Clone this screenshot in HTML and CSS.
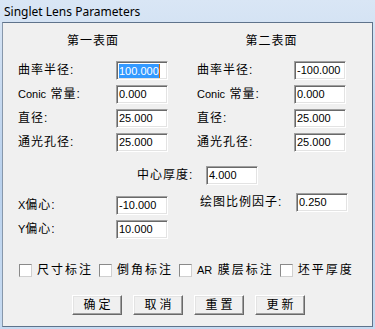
FILE: index.html
```html
<!DOCTYPE html>
<html lang="zh-CN">
  <head>
    <meta charset="UTF-8" />
    <title>Singlet Lens Parameters</title>
    <link rel="stylesheet" href="styles.css">
  </head>
  <body>
    <div class="window">
      <div class="titlebar">Singlet Lens Parameters</div>
      <div class="client">
        <div class="surfaces">
          <div class="surface">
            <div class="surface-title">第一表面</div>
            <div class="label">曲率半径:</div>
            <div class="field"><span class="selected">100.000</span><span class="caret"></span></div>
            <div class="label"><span class="latin">Conic</span> 常量:</div>
            <div class="field">0.000</div>
            <div class="label">直径:</div>
            <div class="field">25.000</div>
            <div class="label">通光孔径:</div>
            <div class="field">25.000</div>
          </div>
          <div class="surface surface-right">
            <div class="surface-title">第二表面</div>
            <div class="label">曲率半径:</div>
            <div class="field">-100.000</div>
            <div class="label"><span class="latin">Conic</span> 常量:</div>
            <div class="field">0.000</div>
            <div class="label">直径:</div>
            <div class="field">25.000</div>
            <div class="label">通光孔径:</div>
            <div class="field">25.000</div>
          </div>
        </div>

        <div class="thickness">
          <div class="label">中心厚度:</div>
          <div class="field">4.000</div>
        </div>

        <div class="offsets">
          <div class="offset-grid">
            <div class="label"><span class="latin">X</span>偏心:</div>
            <div class="field">-10.000</div>
            <div class="label"><span class="latin">Y</span>偏心:</div>
            <div class="field">10.000</div>
          </div>
          <div class="scale">
            <div class="label">绘图比例因子:</div>
            <div class="field">0.250</div>
          </div>
        </div>

        <div class="checks">
          <div class="check"><span class="box"></span><span class="check-text">尺寸标注</span></div>
          <div class="check"><span class="box"></span><span class="check-text">倒角标注</span></div>
          <div class="check"><span class="box"></span><span class="check-text"><span class="latin">AR</span> 膜层标注</span></div>
          <div class="check"><span class="box"></span><span class="check-text">坯平厚度</span></div>
        </div>

        <div class="buttons">
          <div class="btn">确定</div>
          <div class="btn">取消</div>
          <div class="btn">重置</div>
          <div class="btn">更新</div>
        </div>
      </div>
    </div>
  </body>
</html>
```

FILE: styles.css
```css
body {
  margin: 0;
  padding: 0;
  background-color: #c6daf1;
}
.window {
  width: 375px;
  height: 329px;
  box-sizing: border-box;
  display: flex;
  flex-direction: column;
  padding: 0 2px 2px 2px;
  background: linear-gradient(to bottom, #d9e6f5 0%, #c6d9f0 30%, #b9d1ed 55%, #c3d8f0 80%, #c6daf1 100%);
}
.titlebar {
  height: 22px;
  padding-left: 2px;
  display: flex;
  align-items: center;
  font-family: "Noto Sans", "Open Sans", sans-serif;
  font-size: 12px;
  color: #000;
  flex-shrink: 0;
}
.client {
  flex: 1;
  background-color: #f0f0f0;
  border: 1px solid #5f738b;
  border-left-color: #8797aa;
  font-family: "Liberation Sans", "Noto Sans CJK SC", sans-serif;
  font-size: 12px;
  color: #000;
}
.label {
  letter-spacing: 1px;
  line-height: 19px;
  white-space: nowrap;
}
.latin {
  font-size: 11px;
  letter-spacing: 0;
}
.field {
  height: 19px;
  box-sizing: border-box;
  background-color: #fff;
  border: 1px solid;
  border-color: #a0a0a0 #fff #fff #a0a0a0;
  box-shadow: inset 1px 1px 0 #696969, inset -1px -1px 0 #e3e3e3;
  padding: 0 0 0 2px;
  font-size: 11px;
  line-height: 17px;
  white-space: nowrap;
  display: flex;
  align-items: center;
}
.selected {
  background-color: #3399ff;
  color: #fff;
  line-height: 14px;
}
.caret {
  display: inline-block;
  width: 1px;
  height: 14px;
  background-color: #d86a00;
}

/* surfaces */
.surfaces {
  display: flex;
  gap: 29px;
  padding: 11px 0 0 15px;
}
.surface {
  display: grid;
  grid-template-columns: 98px 52px;
  row-gap: 5px;
}
.surface-right {
  grid-template-columns: 97px 52px;
}
.surface-title {
  grid-column: 1 / 3;
  text-align: center;
  font-size: 12px;
  line-height: 14px;
  letter-spacing: 1px;
  margin-bottom: 8px;
}

/* thickness */
.thickness {
  display: grid;
  grid-template-columns: 69px 52px;
  padding-left: 134px;
  margin-top: 14px;
}

/* offsets */
.offsets {
  display: flex;
  gap: 32px;
  padding-left: 15px;
  margin-top: 11px;
}
.offset-grid {
  display: grid;
  grid-template-columns: 98px 52px;
  row-gap: 5px;
}
.scale {
  display: grid;
  grid-template-columns: 96px 52px;
  margin-top: -3px;
  align-self: start;
}

/* checkboxes */
.checks {
  display: flex;
  gap: 6px;
  padding-left: 16px;
  margin-top: 24px;
  height: 14px;
  align-items: center;
}
.check {
  display: flex;
  align-items: center;
  gap: 5px;
}
.box {
  width: 13px;
  height: 13px;
  box-sizing: border-box;
  background-color: #fff;
  border: 1px solid;
  border-color: #8a8a8a #d0d0d0 #d0d0d0 #8a8a8a;
}
.check-text {
  letter-spacing: 2px;
  line-height: 14px;
  white-space: nowrap;
}
.check-text .latin {
  font-size: 11px;
  letter-spacing: 0;
}

/* buttons */
.buttons {
  display: flex;
  gap: 11px;
  padding-left: 69px;
  margin-top: 18px;
}
.btn {
  width: 50px;
  height: 20px;
  box-sizing: border-box;
  background-color: #f0f0f0;
  border: 1px solid;
  border-color: #fff #696969 #696969 #fff;
  box-shadow: inset -1px -1px 0 #a0a0a0, inset 1px 1px 0 #e3e3e3;
  display: flex;
  align-items: center;
  justify-content: center;
  letter-spacing: 3px;
  padding-left: 3px;
  line-height: 14px;
}
```
